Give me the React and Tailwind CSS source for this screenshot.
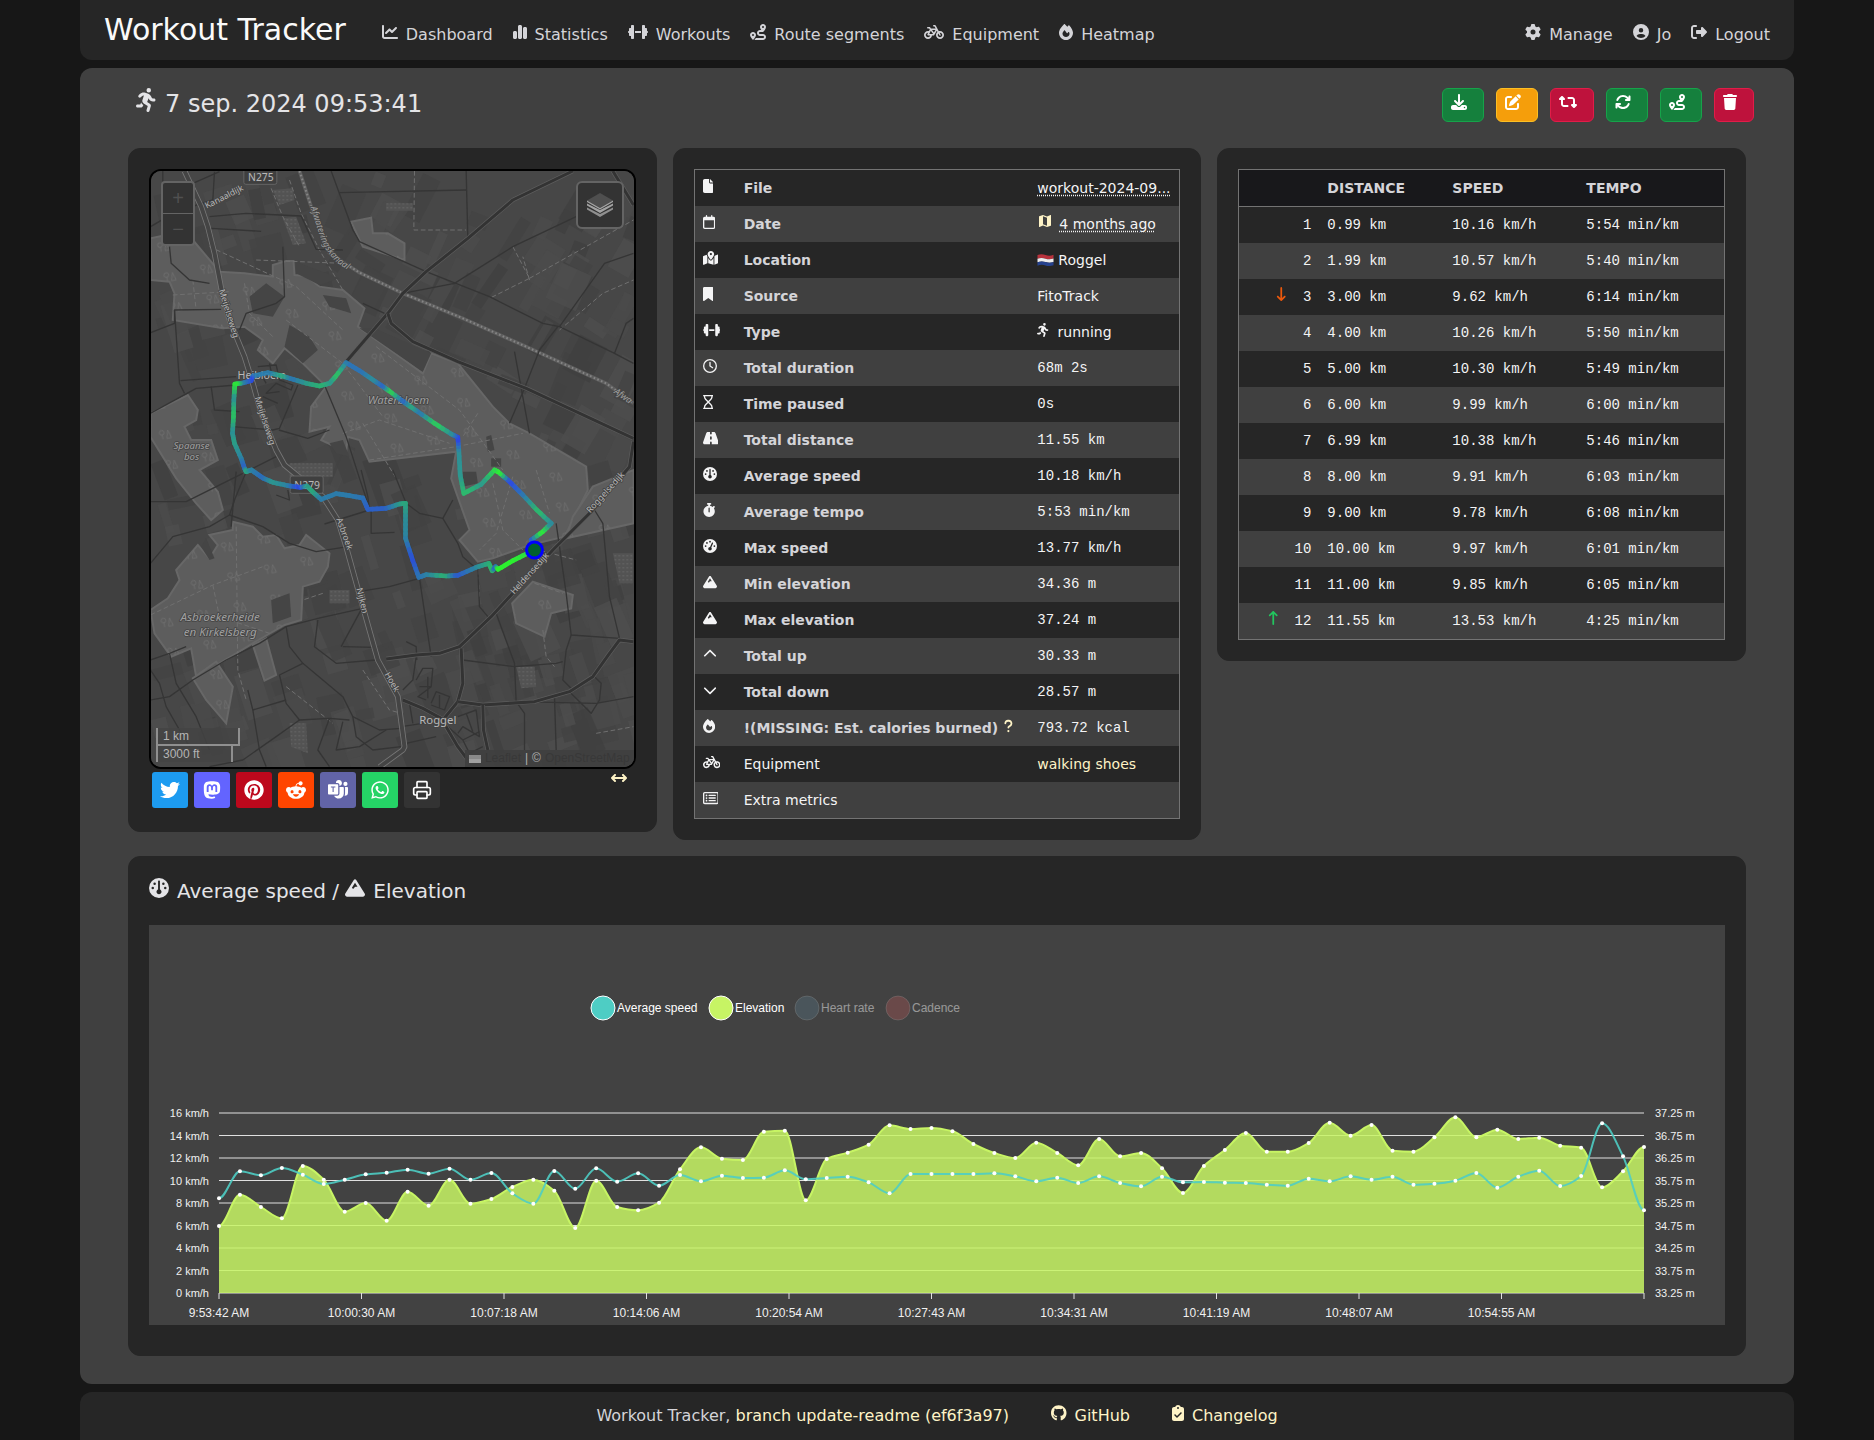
import React from "react";
import {
  FaChartLine, FaChartSimple, FaDumbbell, FaRoute, FaBicycle, FaFire, FaGear, FaCircleUser,
  FaRightFromBracket, FaPersonRunning, FaDownload, FaPenToSquare, FaRetweet, FaArrowsRotate,
  FaTrash, FaFile, FaRegCalendar, FaMapLocationDot, FaBookmark, FaRegClock, FaRegHourglass,
  FaRoad, FaGauge, FaStopwatch, FaGaugeHigh, FaMountain, FaChevronUp, FaChevronDown,
  FaRegRectangleList, FaQuestion, FaArrowDownLong, FaArrowUpLong, FaArrowsLeftRight,
  FaTwitter, FaMastodon, FaPinterest, FaRedditAlien, FaWhatsapp, FaGithub, FaClipboardCheck,
} from "react-icons/fa6";
import { BsMicrosoftTeams } from "react-icons/bs";
import { LuPrinter } from "react-icons/lu";
import { MdMap } from "react-icons/md";

/* Icon that sits on the text baseline, as tall as the text's font size. */
function Icon({ as: Glyph, className = "" }) {
  return (
    <span className={`inline-block ${className}`}>
      <Glyph size="auto" aria-hidden="true" className="inline-block h-[1em] w-auto align-baseline" />
    </span>
  );
}

const NAV = [
  [FaChartLine, "Dashboard"],
  [FaChartSimple, "Statistics"],
  [FaDumbbell, "Workouts"],
  [FaRoute, "Route segments"],
  [FaBicycle, "Equipment"],
  [FaFire, "Heatmap"],
];
const USER_NAV = [
  [FaGear, "Manage"],
  [FaCircleUser, "Jo"],
  [FaRightFromBracket, "Logout"],
];

function NavLinks({ items, label }) {
  return (
    <nav aria-label={label} className="flex items-baseline gap-5 text-base text-zinc-300">
      {items.map(([glyph, text]) => (
        <a key={text} href="#" className="whitespace-nowrap">
          <Icon as={glyph} className="mr-2" />
          {text}
        </a>
      ))}
    </nav>
  );
}

function Header() {
  return (
    <header className="flex h-[60px] items-baseline justify-between rounded-b-xl bg-neutral-800 px-6 pt-3">
      <div className="flex items-baseline gap-9">
        <a href="#" className="text-3xl leading-9 text-neutral-50">Workout Tracker</a>
        <NavLinks items={NAV} label="Main" />
      </div>
      <NavLinks items={USER_NAV} label="Account" />
    </header>
  );
}

const GREEN = "border-[#16a34a] bg-[#15803d]";
const RED = "border-[#e11d48] bg-[#be123c]";
const ACTIONS = [
  [FaDownload, "Download", GREEN],
  [FaPenToSquare, "Edit", "border-[#fbbf24] bg-[#f59e0b]"],
  [FaRetweet, "Toggle lock", RED],
  [FaArrowsRotate, "Refresh", GREEN],
  [FaRoute, "Create route segment", GREEN],
  [FaTrash, "Delete", RED],
];

function TitleBar() {
  return (
    <div className="mb-[26px] flex items-start justify-between pr-10 pl-14">
      <h2 className="text-2xl leading-8 text-zinc-200">
        <Icon as={FaPersonRunning} className="mr-2" />7 sep. 2024 09:53:41
      </h2>
      <div className="flex gap-3">
        {ACTIONS.map(([Glyph, name, tone]) => (
          <button
            key={name}
            type="button"
            aria-label={name}
            className={`flex h-[34px] items-start rounded-md border pt-[5px] pr-4 pl-2 text-white ${tone}`}
          >
            <Glyph size="auto" className="block h-4 w-auto" />
          </button>
        ))}
      </div>
    </div>
  );
}

function Card({ children, className = "" }) {
  return <section className={`rounded-xl border border-neutral-800 bg-neutral-800 p-5 ${className}`}>{children}</section>;
}

/* ---------- Map ---------- */

function fields() {
  let seed = 7;
  const rnd = () => {
    seed = (seed * 16807) % 2147483647;
    return seed / 2147483647;
  };
  const tones = ["#404040", "#434343", "#4b4b4b", "#4e4e4e", "#424242", "#4a4a4a"];
  const out = [];
  for (let i = 0; i < 330; i++) {
    const x = 63 + rnd() * 1450;
    const y = 63 + rnd() * 1790;
    const w = 25 + rnd() * 75;
    const h = 30 + rnd() * 120;
    const angle = (x > 600 && y < 900 ? 28 : -18) + (rnd() * 14 - 7);
    out.push(
      <rect key={i} x={x} y={y} width={w} height={h} fill={tones[Math.floor(rnd() * 6)]} opacity="0.8" transform={`rotate(${angle.toFixed(1)} ${x.toFixed(0)} ${y.toFixed(0)})`} />
    );
  }
  return out;
}

const FORESTS = [
  "63,265 110,255 190,270 270,365 345,370 430,380 430,345 470,333 492,333 495,375 530,378 570,410 640,420 705,475 685,530 880,670 905,610 985,640 1090,770 1140,820 1200,850 1370,950 1375,1020 1305,1160 1200,1185 1090,1225 1045,1235 990,1170 1020,1140 965,985 980,905 720,935 690,870 655,860 650,905 575,870 600,830 540,845 545,770 590,710 520,640 465,595 430,640 385,600 400,570 345,530 280,535 130,510 135,430 120,395 63,390",
  "63,1380 115,1345 150,1290 140,1260 205,1185 240,1225 265,1185 240,1155 310,1140 310,1115 370,1130 400,1160 440,1155 465,1195 510,1185 530,1155 600,1210 595,1250 570,1295 520,1310 515,1410 465,1425 370,1480 270,1540 200,1580 185,1495 125,1520 75,1450",
  "190,1585 260,1535 310,1610 290,1720 230,1650",
  "370,1485 410,1465 440,1575 405,1592",
  "63,790 175,735 205,780 200,810 165,830 185,870 245,870 265,930 210,960 265,1025 280,1080 245,1110 200,1060 140,985 63,860",
  "1330,1100 1390,1010 1512,960 1512,1120 1310,1165",
  "1210,1295 1330,1335 1325,1375 1265,1390 1245,1460 1160,1420 1148,1360",
  "665,215 725,203 730,250 775,250 825,280 825,330 700,290",
];
const CLEARINGS = [
  "500,335 630,385 570,405 500,370", "480,525 540,560 565,600 520,640 465,590", "735,535 905,610 880,665 690,535",
  "360,440 410,400 465,440 430,500 370,490", "580,435 650,445 665,490 600,470", "425,1350 480,1330 485,1400 430,1420",
  "230,1165 255,1225 240,1230 215,1190", "1085,925 1115,925 1115,950 1085,950", "1000,965 1040,965 1045,1000 1000,1010",
  "600,880 640,870 660,920 620,910", "1070,860 1085,855 1095,900 1075,905",
];
const DARK_ROADS = [
  "M1330 63L1150 150L1015 265L890 365L820 430L775 490L650 635",
  "M775 490L785 520L850 575L985 635L1190 715L1512 865",
  "M1512 875L1500 950L1390 1080L1270 1200L1085 1400L990 1490L930 1510L860 1515L770 1527",
  "M995 1495L1000 1600L985 1655L940 1710",
  "M820 1650L880 1675L935 1705L985 1790L1015 1830",
  "M985 1655L1060 1665L1215 1655L1320 1625L1390 1580L1440 1510L1470 1470L1512 1475",
  "M1060 1665L1062 1740L1075 1800", "M1450 63L1512 165",
];
const THIN_ROADS = [
  "M605 63L670 240L690 275L890 365L1080 440L1240 520L1290 530L1455 610L1512 640",
  "M630 128L1010 120", "M1010 63L1015 265", "M820 430L975 400L1150 290L1340 200", "M1290 530L1425 340L1512 310",
  "M1285 530L1230 600L1185 715L1140 820", "M240 200L350 190L515 198L560 298L640 300", "M245 235L395 244", "M63 230L140 185L250 150L255 65", "M100 63L100 100M190 100L270 65",
  "M120 290L125 340L180 390L240 400", "M63 548L135 520L135 480L275 478", "M135 480L150 700L165 730", "M153 692L320 680", "M63 790L200 715L320 705", "M585 705L650 860L690 985L715 1060",
  "M505 705L450 835L430 840L310 830", "M448 840L535 865L600 840", "M245 710L255 780L330 785", "M63 1240L130 1160L240 1130L300 1095L315 1050L350 965L440 920", "M63 1055L170 1055L340 970",
  "M300 1095L400 1130L480 1180L560 1205L655 1190", "M320 965L305 1130", "M585 1122L720 1080L715 1040L695 960", "M725 1080L725 1150L795 1147", "M440 1035L480 1050L475 1020", "M790 960L830 1060L870 1090L940 1105L970 1050",
  "M940 1105L985 1180L1000 1220L1045 1260L1050 1370L1075 1400", "M705 1322L780 1310L870 1285L905 1520", "M1395 1080L1420 1120L1440 1340L1470 1465", "M1470 1465L1325 1455L1310 1330L1280 1120",
  "M1100 1390L1155 1540L1160 1655L1185 1690L1185 1800", "M1325 1455L1310 1500L1300 1590L1330 1620", "M1275 1640L1280 1800", "M63 1530L120 1510L170 1490", "M63 1650L120 1640L190 1590L290 1530L390 1480L470 1430L565 1405L700 1375",
  "M565 1410L555 1490L620 1540L740 1530", "M470 1430L480 1490L520 1540L640 1640L670 1700L750 1740L815 1735", "M520 1540L450 1575L470 1660L510 1710L600 1705L660 1710", "M635 1490L700 1370", "M640 1490L735 1492", "M355 1620L370 1680L390 1800L410 1850",
  "M370 1680L470 1650", "M120 1510L140 1600L200 1700L240 1800", "M63 1560L90 1600L110 1670L150 1740L180 1790", "M600 1705L565 1800L600 1850", "M640 1715L620 1800L690 1790L770 1740", "M510 1710L440 1760L340 1830L240 1850", "M670 1700L680 1760L730 1800L815 1790",
  "M860 1590L880 1555L910 1555L905 1610L865 1640L890 1650M870 1610L905 1610M895 1580L895 1645", "M905 1660L920 1625L960 1640L945 1680L905 1665M930 1635L930 1675", "M985 1700L1040 1680L1050 1760L1000 1730L985 1750M1010 1690L1030 1745", "M955 1730L1000 1770L1050 1745M1000 1770L1020 1810L1060 1790",
  "M385 650L440 645L450 690L490 705L485 720L440 700L410 730L450 725M390 665L410 700M420 640L430 690M400 740L445 760", "M820 1620L850 1590L860 1520M840 1660L850 1720M815 1730L880 1720L930 1710M830 1780L920 1760", "M1455 610L1490 520L1512 505", "M1155 605L1200 850", "M700 460L765 490", "M460 290L465 440L440 460L350 490L330 540",
  "M1000 1530L1155 1550L1280 1540L1300 1535", "M1395 1580L1415 1600L1410 1650L1385 1690L1320 1625M1160 1655L1400 1660L1512 1640", "M830 1475L860 1490L862 1530",
];
const DASHED = [
  "M855 63L853 240L1010 240", "M480 90L515 190L570 300L640 420", "M425 115L460 200L510 290", "M380 330L640 340", "M240 290L500 410L640 540", "M130 435L300 425", "M1150 290L1200 385L1080 445", "M1200 385L1512 210",
  "M1200 390L1180 320", "M1290 540L1420 430L1512 390", "M470 510L640 640L760 800", "M740 590L990 780L1120 960", "M640 850L750 810L960 880", "M720 930L980 890L1180 850", "M1045 790L1000 860", "M320 1130L325 1560L350 1650", "M63 1395L250 1305L400 1250", "M250 1305L270 1400L420 1450",
  "M1090 1000L1120 1140L1180 1200", "M1150 980L1100 1150L1050 1200", "M1220 960L1260 1090", "M700 820L800 985", "M345 400L360 490L430 560", "M190 390L200 480", "M1240 1440L1250 1520L1275 1550", "M1400 1750L1512 1730", "M1215 1300L1300 1330", "M1045 1260L1050 1340", "M470 1610L610 1720", "M580 1330L520 1350", "M700 1560L780 1680L815 1690", "M1190 1190L1340 1230",
];

/* Route points: x, y, pace (0 slow, 1 fast). */
const TRACK = [
  [1214, 1200, 0.1], [1205, 1170, 0.1], [1240, 1145, 1], [1265, 1120, 0.4], [1222, 1080, 0.7], [1180, 1035, 0.35], [1135, 990, 0.05],
  [1105, 965, 1], [1095, 960, 0.9], [1055, 1003, 0.5], [1003, 1030, 0.7], [992, 975, 0.5], [988, 900, 0.45], [985, 862, 0], [965, 852, 0.4],
  [915, 820, 0.8], [865, 785, 0.3], [840, 768, 0.6], [815, 750, 0.2], [778, 722, 0.85], [755, 706, 0.2], [725, 686, 0.45], [690, 662, 0.3],
  [650, 638, 0.3], [618, 680, 0.75], [600, 700, 0.5], [570, 708, 0.65], [530, 700, 0.55], [480, 685, 0.3], [450, 676, 0.6], [415, 668, 0.35],
  [370, 678, 0.35], [365, 692, 0.05], [335, 700, 0.4], [316, 702, 1], [313, 750, 0.45], [312, 800, 0.75], [309, 850, 0.45], [315, 880, 0.55],
  [335, 925, 0.4], [345, 955, 0.2], [350, 965, 0.6], [366, 960, 0.4], [400, 984, 0.25], [430, 997, 0.5], [475, 1007, 0.4], [512, 1012, 0.05],
  [532, 1008, 0.5], [552, 1028, 0.6], [575, 1048, 0.35], [620, 1031, 0.35], [660, 1037, 0.35], [700, 1044, 0.3], [715, 1078, 0.2], [770, 1075, 0.2],
  [810, 1062, 0.5], [828, 1060, 0.6], [828, 1110, 0.45], [828, 1165, 0.4], [850, 1232, 0.1], [868, 1282, 0.3], [890, 1274, 0.35], [950, 1278, 0.65],
  [985, 1276, 0.15], [1040, 1252, 0.4], [1078, 1240, 0.6], [1088, 1262, 0.7], [1098, 1250, 0.15], [1106, 1258, 1], [1150, 1232, 1], [1190, 1212, 0.9], [1214, 1200, 1],
];

function trackSegments() {
  const out = [];
  for (let i = 0; i < TRACK.length - 1; i++) {
    const [x1, y1, p1] = TRACK[i];
    const [x2, y2, p2] = TRACK[i + 1];
    for (let k = 0; k < 4; k++) {
      const a = k / 4;
      const b = (k + 1) / 4;
      const p = p1 + (p2 - p1) * ((a + b) / 2);
      out.push(
        <line
          key={`${i}-${k}`}
          x1={x1 + (x2 - x1) * a} y1={y1 + (y2 - y1) * a}
          x2={x1 + (x2 - x1) * b} y2={y1 + (y2 - y1) * b}
          stroke={`rgb(42,${Math.round(60 + 195 * p)},${Math.round(250 - 205 * p)})`}
        />
      );
    }
  }
  return out;
}

const PLACES = [
  ["Waterbloem", 807, 763, 34, 0, true], ["Spaanse", 186, 896, 29, 0, true], ["bos", 186, 931, 29, 0, true],
  ["Asbroekerheide", 272, 1414, 35, 0, true], ["en Kirkelsberg", 272, 1457, 35, 0, true],
  ["Heibloem", 397, 686, 32, 0, false], ["Roggel", 925, 1721, 34, 0, false], ["N275", 394, 92, 31, 0, false], ["N279", 533, 1016, 31, 0, false],
  ["Kanaaldijk", 288, 148, 26, -27, false], ["Meijelseweg", 290, 493, 26, 73, false], ["Meijelseweg", 398, 815, 26, 72, false],
  ["Asbroek", 637, 1154, 26, 70, false], ["Nijken", 690, 1354, 26, 76, false], ["Hoek", 780, 1600, 26, 60, false],
  ["Heldensedijk", 1207, 1276, 26, -48, false], ["Roggelsedijk", 1434, 1033, 26, -48, false],
];

const CANAL = "M510 63L545 170L600 310L690 368L820 430L1000 505L1190 590L1430 700L1512 760";
const MAIN_ROAD = "M165 63L215 170L235 230L255 310L280 440L300 510L345 620L370 700L395 790L440 900L465 945L580 1040L625 1110L650 1190L700 1370L745 1530L805 1640L825 1790L820 1800L750 1851";

function MapDrawing() {
  return (
    <svg viewBox="63 63 1451 1788" preserveAspectRatio="xMidYMid slice" className="block h-full w-full" role="img" aria-label="Map of the workout route around Heibloem and Roggel">
      <defs>
        <pattern id="trees" width="112" height="92" patternUnits="userSpaceOnUse" patternTransform="rotate(-12)">
          <g fill="none" stroke="#727272" strokeWidth="2">
            <circle cx="30" cy="22" r="7" /><path d="M30 29v13M42 42l7-24l7 24z" />
          </g>
        </pattern>
        <pattern id="dots" width="12" height="12" patternUnits="userSpaceOnUse">
          <rect width="12" height="12" fill="#535353" /><rect x="4" y="4" width="3" height="3" fill="#777" />
        </pattern>
        <path id="canal" d="M543 172L572 262Q602 345 690 374" />
      </defs>
      <rect x="63" y="63" width="1451" height="1788" fill="#474747" />
      {fields()}
      {FORESTS.map((points) => (
        <g key={points}>
          <polygon points={points} fill="#5d5d5d" stroke="#676767" strokeWidth="6" />
          <polygon points={points} fill="url(#trees)" />
        </g>
      ))}
      <g fill="#454545">{CLEARINGS.map((points) => <polygon key={points} points={points} />)}</g>
      <g fill="url(#dots)">
        <path d="M460 205L500 200L530 280L490 285zM430 120L490 115L495 150L450 165zM770 160h80v22h-80zM480 940h130v40h-130zM600 1320h60v40h-60zM1160 1550h55l5 60l-45 5zM1450 1210h60v90h-40zM480 1720l50 0l5 90l-50-20z" />
      </g>
      <g fill="none" strokeDasharray="14 8" stroke="#707070" strokeWidth="3">{DASHED.map((d) => <path key={d} d={d} />)}</g>
      <g fill="none">
        <path d={CANAL} stroke="#5e5e5e" strokeWidth="11" />
        <path d={CANAL} stroke="#858585" strokeWidth="6" strokeDasharray="5 7" />
      </g>
      <g fill="none" strokeLinejoin="round">
        <g stroke="#353535" strokeWidth="4">{THIN_ROADS.map((d) => <path key={d} d={d} />)}</g>
        {DARK_ROADS.map((d) => (
          <g key={d}><path d={d} stroke="#5d5d5d" strokeWidth="13" /><path d={d} stroke="#333333" strokeWidth="9" /></g>
        ))}
        <path d={MAIN_ROAD} stroke="#777777" strokeWidth="17" />
        <path d={MAIN_ROAD} stroke="#444444" strokeWidth="12" />
      </g>
      <g fill="#3f3f3f" stroke="#646464" strokeWidth="3">
        <rect x="343" y="50" width="99" height="53" rx="6" /><rect x="482" y="978" width="99" height="52" rx="6" />
      </g>
      <g style={{ fontFamily: '"Noto Sans", sans-serif', paintOrder: "stroke" }} fill="#b8b8b8" stroke="#444444" strokeWidth="5" strokeLinejoin="round" textAnchor="middle">
        {PLACES.map(([text, x, y, size, angle, italic]) => (
          <text key={`${text}${y}`} x={x} y={y} fontSize={size} fill={italic ? "#a0a0a0" : "#b8b8b8"} fontStyle={italic ? "italic" : "normal"} transform={`rotate(${angle} ${x} ${y})`}>{text}</text>
        ))}
        <text fontSize="27" fill="#a0a0a0" fontStyle="italic" textAnchor="start"><textPath href="#canal">Afwateringskanaal</textPath></text>
        <text x="1452" y="728" fontSize="27" fill="#a0a0a0" fontStyle="italic" textAnchor="start" transform="rotate(35 1452 728)">Afwa</text>
      </g>
      <g strokeWidth="14" strokeLinecap="round" opacity="0.92">{trackSegments()}</g>
      <circle cx="1215" cy="1200" r="24" fill="#006030" stroke="#0000ff" strokeWidth="9" />
    </svg>
  );
}

function WorkoutMap() {
  return (
    <div className="relative h-[600px] overflow-hidden rounded-xl border-2 border-black bg-[#484848] font-['Liberation_Sans',sans-serif]">
      <MapDrawing />
      <div className="absolute top-2.5 left-2.5 flex w-[34px] flex-col overflow-hidden rounded border-2 border-[#646464] bg-[#333333] text-xl text-[#505050]">
        <button type="button" aria-label="Zoom in" className="h-[31px] border-b border-[#646464] leading-none">+</button>
        <button type="button" aria-label="Zoom out" className="h-[30px] leading-none">−</button>
      </div>
      <button type="button" aria-label="Layers" className="absolute top-2.5 right-2.5 flex h-12 w-12 items-center justify-center rounded-md border-2 border-[#646464] bg-[#333333]">
        <svg viewBox="0 0 26 26" className="h-[26px] w-[26px]" aria-hidden="true">
          <path d="M0 17.500L13 25l13-7.500v-2L13 22L0 15.500z" fill="#8f8f8f" />
          <path d="M0 13.500L13 21l13-7.500v-2L13 18L0 11.500z" fill="#a3a3a3" />
          <path d="M13 1L0 8.500L13 16l13-7.500z" fill="#4f4f4f" />
          <path d="M0 8.500L13 16l13-7.500v1.500L13 17.500L0 10z" fill="#a3a3a3" />
        </svg>
      </button>
      <div className="absolute bottom-[5px] left-[5px] text-xs leading-4 text-[#b5b5b5]">
        <div className="h-[18px] w-[84px] border-x-2 border-b-2 border-[#8f8f8f] bg-[#444444]/80 pl-[5px]">1 km</div>
        <div className="h-4 w-[77px] border-x-2 border-[#8f8f8f] bg-[#444444]/80 pl-[5px]">3000 ft</div>
      </div>
      <div className="absolute right-0 bottom-0 flex items-center gap-1 bg-[#3f3f3f]/90 px-1 text-xs leading-[17px] text-[#b0b0b0]">
        <svg viewBox="0 0 12 8" className="h-2 w-3" aria-hidden="true">
          <path d="M0 0h12v4H0z" fill="#8a8a8a" /><path d="M0 4h12v4H0z" fill="#a0a0a0" />
        </svg>
        <a href="#" className="text-[#383838]">Leaflet</a>
        <span>|</span>
        <span>©</span>
        <a href="#" className="text-[#383838]">OpenStreetMap</a>
      </div>
    </div>
  );
}

const SHARES = [
  [FaTwitter, "Twitter", "bg-[#1d9bf0]"],
  [FaMastodon, "Mastodon", "bg-[#6364ff]"],
  [FaPinterest, "Pinterest", "bg-[#bd081c]"],
  [FaRedditAlien, "Reddit", "bg-[#ff4500]"],
  [BsMicrosoftTeams, "Teams", "bg-[#6264a7]"],
  [FaWhatsapp, "WhatsApp", "bg-[#25d366]"],
  [LuPrinter, "Print", "bg-[#333333]"],
];

function MapCard() {
  return (
    <Card>
      <WorkoutMap />
      <div className="flex items-start justify-between px-[3px] pb-[3px]">
        <div className="flex gap-1.5 pt-[3px]">
          {SHARES.map(([Glyph, name, tone]) => (
            <button key={name} type="button" aria-label={name} className={`flex h-9 w-9 items-center justify-center rounded-[3px] text-white ${tone}`}>
              <Glyph className="h-5 w-5" />
            </button>
          ))}
        </div>
        <button type="button" aria-label="Toggle map width" className="pt-px pr-1.5 text-amber-100">
          <FaArrowsLeftRight className="h-4 w-4" />
        </button>
      </div>
    </Card>
  );
}

/* ---------- Tables ---------- */

function DutchFlag() {
  return (
    <svg viewBox="0 0 17 12" className="mr-1 inline-block h-3 w-[17px] align-[-1px]" role="img" aria-label="Netherlands">
      <path d="M0.500 1Q4.500 -0.500 8.500 1T16.500 0.800V4.500Q12.500 6 8.500 4.700T0.500 4.700z" fill="#b8323c" />
      <path d="M0.500 4.700Q4.500 3.400 8.500 4.700T16.500 4.500V8Q12.500 9.300 8.500 8T0.500 8.200z" fill="#eeeeee" />
      <path d="M0.500 8.200Q4.500 6.700 8.500 8T16.500 8V11.200Q12.500 12.700 8.500 11.400T0.500 11.700z" fill="#26428f" />
    </svg>
  );
}

const dotted = "underline decoration-dotted underline-offset-2";
const STATS = [
  [FaFile, "File", <a href="#" className={dotted}>workout-2024-09...</a>],
  [FaRegCalendar, "Date", <><a href="#" aria-label="Map" className="mr-1.5 text-amber-100"><MdMap aria-hidden="true" className="-mt-1 inline-block h-4 w-4 align-baseline" /></a><abbr className={dotted}>4 months ago</abbr></>],
  [FaMapLocationDot, "Location", <><DutchFlag />Roggel</>],
  [FaBookmark, "Source", "FitoTrack"],
  [FaDumbbell, "Type", <><Icon as={FaPersonRunning} className="mr-2" />running</>],
  [FaRegClock, "Total duration", "68m 2s", true],
  [FaRegHourglass, "Time paused", "0s", true],
  [FaRoad, "Total distance", "11.55 km", true],
  [FaGauge, "Average speed", "10.18 km/h", true],
  [FaStopwatch, "Average tempo", "5:53 min/km", true],
  [FaGaugeHigh, "Max speed", "13.77 km/h", true],
  [FaMountain, "Min elevation", "34.36 m", true],
  [FaMountain, "Max elevation", "37.24 m", true],
  [FaChevronUp, "Total up", "30.33 m", true],
  [FaChevronDown, "Total down", "28.57 m", true],
  [FaFire, "!(MISSING: Est. calories burned)", "793.72 kcal", true],
  [FaBicycle, "Equipment", <a href="#" className="text-amber-100">walking shoes</a>],
  [FaRegRectangleList, "Extra metrics", ""],
];

const mono = "font-['Liberation_Mono',monospace]";

function StatsCard() {
  return (
    <Card>
      <table className="w-full table-fixed border-separate border-spacing-0 border border-neutral-500 text-left text-sm leading-5 text-zinc-100">
        <colgroup>
          <col className="w-[41px]" />
          <col />
          <col className="w-[150px]" />
        </colgroup>
        <tbody>
          {STATS.map(([glyph, label, value, numeric], i) => (
            <tr key={label} className="h-9 even:bg-neutral-700">
              <td className="px-2 py-2"><Icon as={glyph} /></td>
              <th scope="row" className={`px-2 py-2 whitespace-nowrap ${i < 16 ? "font-bold text-zinc-300" : "font-normal"}`}>
                {label}
                {i === 15 && (
                  <a href="#" aria-label="About calories" className="ml-1.5 text-amber-100"><Icon as={FaQuestion} /></a>
                )}
              </th>
              <td className={`px-2 py-2 whitespace-nowrap ${numeric ? mono : ""}`}>{value}</td>
            </tr>
          ))}
        </tbody>
      </table>
    </Card>
  );
}

const SPLITS = [
  ["0.99 km", "10.16 km/h", "5:54 min/km"],
  ["1.99 km", "10.57 km/h", "5:40 min/km"],
  ["3.00 km", "9.62 km/h", "6:14 min/km"],
  ["4.00 km", "10.26 km/h", "5:50 min/km"],
  ["5.00 km", "10.30 km/h", "5:49 min/km"],
  ["6.00 km", "9.99 km/h", "6:00 min/km"],
  ["6.99 km", "10.38 km/h", "5:46 min/km"],
  ["8.00 km", "9.91 km/h", "6:03 min/km"],
  ["9.00 km", "9.78 km/h", "6:08 min/km"],
  ["10.00 km", "9.97 km/h", "6:01 min/km"],
  ["11.00 km", "9.85 km/h", "6:05 min/km"],
  ["11.55 km", "13.53 km/h", "4:25 min/km"],
];

function SplitsCard() {
  return (
    <Card>
      <table className="w-full table-fixed border-separate border-spacing-0 border border-neutral-500 text-left text-sm leading-5 text-zinc-100">
        <colgroup>
          <col className="w-[80px]" />
          <col className="w-[125px]" />
          <col className="w-[134px]" />
          <col />
        </colgroup>
        <thead className="bg-zinc-900 text-zinc-300 uppercase">
          <tr>
            <td className="border-b border-neutral-500" />
            {["Distance", "Speed", "Tempo"].map((name) => (
              <th key={name} scope="col" className="border-b border-neutral-500 px-2 py-2 font-bold">{name}</th>
            ))}
          </tr>
        </thead>
        <tbody className={mono}>
          {SPLITS.map((cells, i) => (
            <tr key={cells[0]} className="even:bg-neutral-700">
              <td className="px-2 py-2 text-right whitespace-nowrap">
                {i === 2 && <Icon as={FaArrowDownLong} className="mr-4 text-[#ea580c]" />}
                {i === 11 && <Icon as={FaArrowUpLong} className="mr-4 text-[#22c55e]" />}
                {i + 1}
              </td>
              {cells.map((cell) => <td key={cell} className="px-2 py-2">{cell}</td>)}
            </tr>
          ))}
        </tbody>
      </table>
    </Card>
  );
}

/* ---------- Chart ---------- */

/* Samples on a scale where 540 is the full height of the plot. */
const ELEVATION = [
  201, 295, 258, 224, 381, 340, 244, 270, 217, 304, 262, 340, 268, 282, 318, 340, 307, 195, 337, 258, 248, 271, 371, 437, 403, 399, 484, 487, 278, 402, 421, 445, 503, 492, 495,
  485, 447, 420, 405, 451, 420, 383, 462, 410, 420, 374, 300, 381, 429, 480, 424, 424, 450, 511, 472, 504, 427, 424, 467, 527, 467, 490, 462, 466, 442, 436, 317, 365, 438,
];
const SPEED = [
  284, 365, 353, 375, 355, 327, 340, 356, 361, 370, 358, 373, 340, 360, 299, 268, 366, 313, 374, 334, 359, 322, 354, 335, 352, 345, 346, 368, 341, 345, 349, 332, 299, 357, 357,
  357, 357, 359, 350, 335, 346, 330, 350, 330, 320, 349, 332, 333, 331, 330, 325, 322, 343, 335, 350, 340, 349, 325, 328, 337, 360, 316, 349, 367, 321, 351, 509, 410, 248,
];
const LEFT = 70;
const RIGHT = 1495;
const TOP = 188;
const BASE = 368;
const toPoints = (data) => data.map((v, i) => [LEFT + (i * (RIGHT - LEFT)) / (data.length - 1), BASE - (v / 540) * (BASE - TOP)]);

/* Monotone cubic curve through the points. */
function curve(pts) {
  const n = pts.length;
  const slope = pts.slice(1).map((p, i) => (p[1] - pts[i][1]) / (p[0] - pts[i][0]));
  const tangent = pts.map((_, i) => {
    if (i === 0 || i === n - 1) return 0;
    const a = slope[i - 1];
    const b = slope[i];
    return a * b <= 0 ? 0 : (2 * a * b) / (a + b);
  });
  let d = `M${pts[0][0]} ${pts[0][1]}`;
  for (let i = 1; i < n; i++) {
    const [x0, y0] = pts[i - 1];
    const [x1, y1] = pts[i];
    const h = (x1 - x0) / 3;
    d += `C${x0 + h} ${y0 + tangent[i - 1] * h} ${x1 - h} ${y1 - tangent[i] * h} ${x1} ${y1}`;
  }
  return d;
}

const LEGEND = [
  ["Average speed", 454, 468, "#4ecdc4", true],
  ["Elevation", 572, 586, "#c7f464", true],
  ["Heart rate", 658, 672, "#546e7a", false],
  ["Cadence", 749, 763, "#9c5252", false],
];
const TIMES = ["9:53:42 AM", "10:00:30 AM", "10:07:18 AM", "10:14:06 AM", "10:20:54 AM", "10:27:43 AM", "10:34:31 AM", "10:41:19 AM", "10:48:07 AM", "10:54:55 AM"];
const METRES = ["37.25", "36.75", "36.25", "35.75", "35.25", "34.75", "34.25", "33.75", "33.25"];

function Chart() {
  const elevation = toPoints(ELEVATION);
  const speed = toPoints(SPEED);
  const line = curve(elevation);
  return (
    <svg viewBox="0 0 1576 400" className="mb-2.5 block w-full bg-[#424242]" role="img" aria-label="Average speed and elevation over time" style={{ fontFamily: '"Liberation Sans", sans-serif' }}>
      <g fontSize="12" fill="#ffffff">
        {LEGEND.map(([text, cx, x, tone, on]) => (
          <g key={text} opacity={on ? 1 : 0.45}>
            <circle cx={cx} cy="83" r="12" fill={tone} stroke="#ffffff" strokeOpacity={on ? 1 : 0.3} />
            <text x={x} y="87">{text}</text>
          </g>
        ))}
      </g>
      <g fill="#f0f0f0">
        {METRES.map((m, i) => {
          const y = TOP + (i * (BASE - TOP)) / 8;
          return (
            <g key={m} fontSize="11">
              <line x1={LEFT} x2={RIGHT} y1={y} y2={y} stroke="#e0e0e0" />
              <text x="60" y={y + 4} textAnchor="end">{16 - i * 2} km/h</text>
              <text x="1506" y={y + 4}>{m} m</text>
            </g>
          );
        })}
        {TIMES.map((t, i) => (
          <text key={t} x={LEFT + i * 142.5} y="392" fontSize="12" textAnchor="middle">{t}</text>
        ))}
      </g>
      <path d={`${line}L${RIGHT} ${BASE}L${LEFT} ${BASE}Z`} fill="#c7f464" fillOpacity="0.85" />
      <path d={line} fill="none" stroke="#c7f464" strokeWidth="2" />
      <path d={curve(speed)} fill="none" stroke="#4ecdc4" strokeOpacity="0.9" strokeWidth="2" />
      <g stroke="#e0e0e0">
        {Array.from({ length: 11 }, (_, i) => <line key={i} x1={LEFT + i * 142.5} x2={LEFT + i * 142.5} y1={BASE} y2={BASE + 6} />)}
      </g>
      <g fill="#ffffff">
        {[...elevation, ...speed].map(([x, y], i) => <circle key={i} cx={x} cy={y} r="2" />)}
      </g>
    </svg>
  );
}

export default function App() {
  return (
    <div className="flex min-h-screen flex-col gap-2 bg-neutral-900 px-20 font-['DejaVu_Sans',sans-serif]">
      <Header />
      <main className="rounded-xl bg-neutral-700 pt-5 pb-7">
        <TitleBar />
        <div className="mx-12 grid grid-cols-3 items-start gap-4">
          <MapCard />
          <StatsCard />
          <SplitsCard />
          <Card className="col-span-3">
            <h3 className="mb-5 text-xl leading-7 text-zinc-200">
              <Icon as={FaGauge} className="mr-2" />Average speed / <Icon as={FaMountain} className="mr-2" />Elevation
            </h3>
            <Chart />
          </Card>
        </div>
      </main>
      <footer className="flex flex-1 items-baseline justify-center gap-[42px] rounded-t-xl bg-neutral-800 py-3 text-base leading-6 text-amber-100">
        <span><span className="text-zinc-300">Workout Tracker, </span><a href="#">branch update-readme (ef6f3a97)</a></span>
        <a href="#"><Icon as={FaGithub} className="mr-2" />GitHub</a>
        <a href="#"><Icon as={FaClipboardCheck} className="mr-2" />Changelog</a>
      </footer>
    </div>
  );
}
